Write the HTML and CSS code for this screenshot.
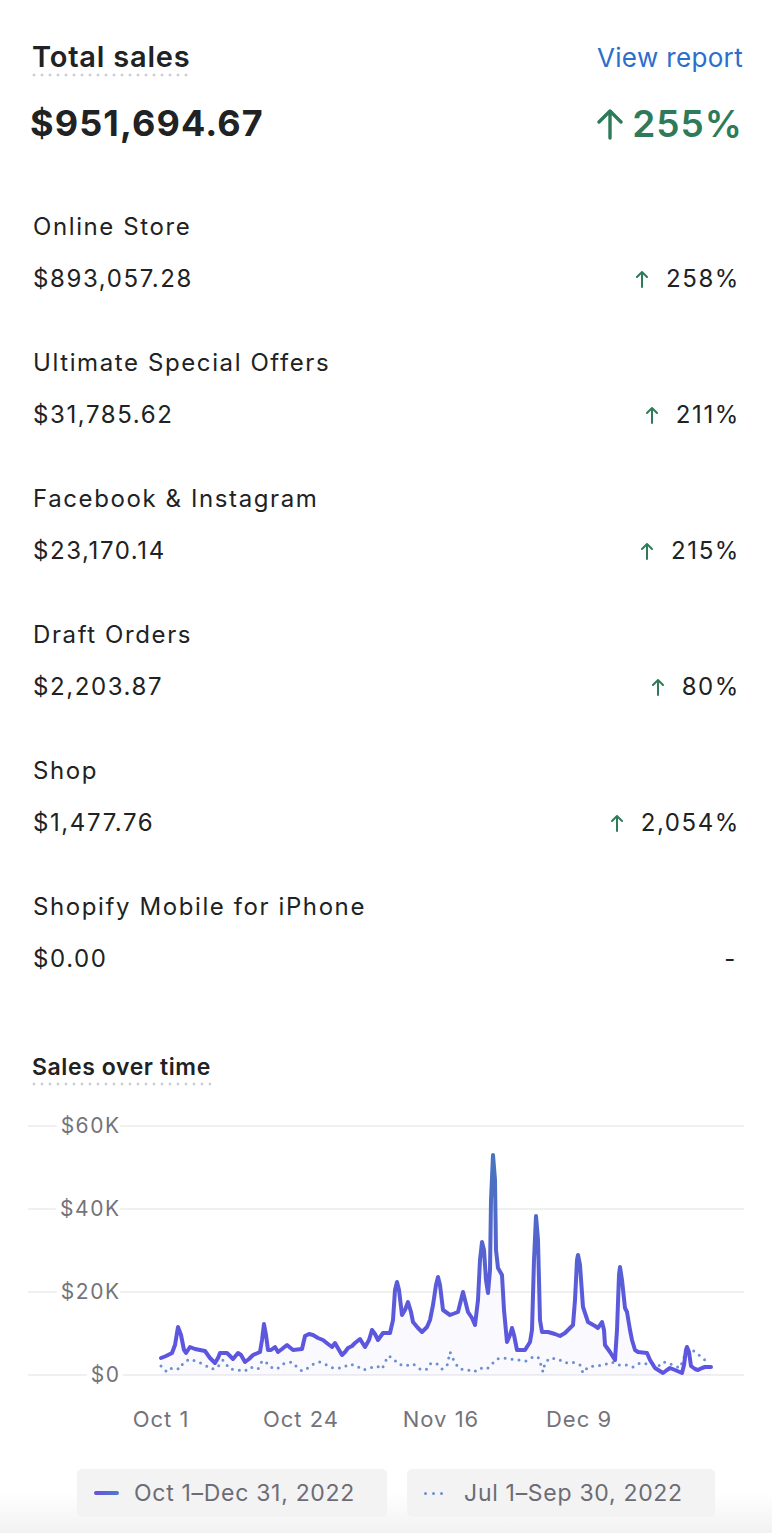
FILE: index.html
```html
<!DOCTYPE html>
<html lang="en">
  <head>
    <meta charset="UTF-8" />
    <meta name="viewport" content="width=device-width, initial-scale=1.0" />
    <title>Total sales</title>
    <link rel="stylesheet" href="styles.css">
  </head>
  <body>
    <div class="card">
      <div class="card-head">
        <h2 class="dotted title">Total sales</h2>
        <a class="report-link" href="#">View report</a>
      </div>
      <div class="card-total">
        <span class="total">$951,694.67</span>
        <span class="total-change">
          <svg class="arrow-big" viewBox="0 0 26 32" width="26" height="32">
            <path d="M13 30V3M2 14L13 3l11 11" fill="none" stroke="currentColor" stroke-width="3.4" stroke-linecap="round" stroke-linejoin="round"/>
          </svg>255%
        </span>
      </div>

      <ul class="channels">
        <li class="channel">
          <span class="channel-name">Online Store</span>
          <div class="channel-row">
            <span>$893,057.28</span>
            <span class="change"><svg class="arrow" viewBox="0 0 12 18" width="12" height="18"><path d="M6 17V2M1 7l5-5 5 5" fill="none" stroke="currentColor" stroke-width="2" stroke-linecap="round" stroke-linejoin="round"/></svg>258%</span>
          </div>
        </li>
        <li class="channel">
          <span class="channel-name">Ultimate Special Offers</span>
          <div class="channel-row">
            <span>$31,785.62</span>
            <span class="change"><svg class="arrow" viewBox="0 0 12 18" width="12" height="18"><path d="M6 17V2M1 7l5-5 5 5" fill="none" stroke="currentColor" stroke-width="2" stroke-linecap="round" stroke-linejoin="round"/></svg>211%</span>
          </div>
        </li>
        <li class="channel">
          <span class="channel-name">Facebook &amp; Instagram</span>
          <div class="channel-row">
            <span>$23,170.14</span>
            <span class="change"><svg class="arrow" viewBox="0 0 12 18" width="12" height="18"><path d="M6 17V2M1 7l5-5 5 5" fill="none" stroke="currentColor" stroke-width="2" stroke-linecap="round" stroke-linejoin="round"/></svg>215%</span>
          </div>
        </li>
        <li class="channel">
          <span class="channel-name">Draft Orders</span>
          <div class="channel-row">
            <span>$2,203.87</span>
            <span class="change"><svg class="arrow" viewBox="0 0 12 18" width="12" height="18"><path d="M6 17V2M1 7l5-5 5 5" fill="none" stroke="currentColor" stroke-width="2" stroke-linecap="round" stroke-linejoin="round"/></svg>80%</span>
          </div>
        </li>
        <li class="channel">
          <span class="channel-name">Shop</span>
          <div class="channel-row">
            <span>$1,477.76</span>
            <span class="change"><svg class="arrow" viewBox="0 0 12 18" width="12" height="18"><path d="M6 17V2M1 7l5-5 5 5" fill="none" stroke="currentColor" stroke-width="2" stroke-linecap="round" stroke-linejoin="round"/></svg>2,054%</span>
          </div>
        </li>
        <li class="channel">
          <span class="channel-name">Shopify Mobile for iPhone</span>
          <div class="channel-row">
            <span>$0.00</span>
            <span class="change no-change">-</span>
          </div>
        </li>
      </ul>

      <h3 class="dotted subtitle">Sales over time</h3>

      <svg class="chart" viewBox="28 1100 716 340" width="716" height="340">
        <defs>
          <linearGradient id="lineGrad" gradientUnits="userSpaceOnUse" x1="0" y1="1155" x2="0" y2="1375">
            <stop offset="0" stop-color="#4776bd"/>
            <stop offset="0.6" stop-color="#5a5cd8"/>
            <stop offset="1" stop-color="#5e54e2"/>
          </linearGradient>
        </defs>
        <g class="grid">
          <line x1="28" y1="1126" x2="744" y2="1126"/>
          <line x1="28" y1="1209" x2="744" y2="1209"/>
          <line x1="28" y1="1292" x2="744" y2="1292"/>
          <line x1="28" y1="1375" x2="744" y2="1375"/>
        </g>
        <g class="y-labels">
          <text x="120.5" y="1133">$60K</text>
          <text x="120.5" y="1216">$40K</text>
          <text x="120.5" y="1299">$20K</text>
          <text x="120.5" y="1382">$0</text>
        </g>
        <g class="x-labels">
          <text x="161" y="1427">Oct 1</text>
          <text x="301" y="1427">Oct 24</text>
          <text x="441" y="1427">Nov 16</text>
          <text x="579" y="1427">Dec 9</text>
        </g>
        <polygon class="area" points="161,1375 161,1358 166,1356 172,1353 175,1345 178,1327 181,1335 184,1350 186,1353 190,1347 195,1349 200,1350 205,1351 210,1358 215,1363 218,1358 220,1353 227,1353 233,1359 238,1353 241,1355 245,1362 249,1359 253,1355 260,1352 262,1340 264,1324 266,1335 268,1350 271,1350 275,1347 278,1352 282,1349 287,1345 293,1350 302,1349 305,1336 309,1334 313,1335 318,1338 323,1340 328,1344 332,1347 335,1343 339,1350 342,1355 345,1352 348,1348 352,1346 355,1343 360,1339 365,1347 369,1340 372,1330 375,1334 378,1340 383,1333 390,1333 393,1320 395,1290 397,1282 399,1290 402,1315 405,1310 408,1302 411,1312 413,1322 418,1328 422,1332 427,1327 430,1320 433,1305 436,1285 438,1277 440,1285 443,1310 450,1315 458,1312 461,1300 463,1292 465,1300 468,1312 472,1318 475,1325 478,1300 480,1260 482,1242 484,1250 486,1280 488,1293 490,1270 491,1200 493,1155 495,1180 496,1250 498,1268 502,1275 504,1310 507,1342 510,1335 512,1328 514,1335 517,1350 525,1350 530,1342 532,1330 534,1260 536,1216 538,1240 540,1320 542,1332 548,1332 555,1334 560,1336 565,1333 570,1328 573,1325 575,1300 577,1260 578,1255 580,1265 583,1307 588,1322 595,1326 598,1328 602,1322 604,1330 605,1345 610,1352 615,1360 617,1330 619,1275 620,1267 622,1280 625,1308 627,1312 630,1330 632,1340 635,1350 638,1352 647,1353 650,1360 655,1368 663,1373 667,1370 670,1368 675,1370 682,1373 684,1365 686,1350 687,1347 689,1352 691,1366 695,1369 698,1370 702,1368 705,1367 711,1367 711,1375"/>
        <polyline class="previous" points="161,1366 167,1372 172,1368 180,1369 183,1363 190,1359 198,1362 205,1365 211,1369 217,1368 223,1360 230,1369 237,1370 245,1371 250,1367 258,1369 262,1361 265,1361 270,1367 277,1369 283,1364 292,1362 297,1367 302,1371 308,1368 315,1363 320,1362 327,1365 333,1368 342,1368 350,1364 357,1366 363,1370 370,1368 377,1366 382,1369 388,1356 393,1358 398,1364 405,1366 413,1364 420,1369 426,1370 431,1363 437,1364 442,1369 447,1366 450,1352 455,1363 460,1369 468,1370 474,1372 480,1368 487,1369 492,1364 497,1359 503,1358 511,1359 518,1360 526,1361 533,1357 538,1357 541,1365 543,1372 545,1363 550,1358 558,1359 565,1363 572,1362 580,1365 583,1373 588,1367 595,1366 603,1365 612,1362 618,1365 627,1365 633,1367 640,1363 648,1364 655,1363 660,1366 665,1362 673,1365 680,1368 686,1352 692,1350 697,1353 702,1358 708,1362"/>
        <polyline class="current" points="161,1358 166,1356 172,1353 175,1345 178,1327 181,1335 184,1350 186,1353 190,1347 195,1349 200,1350 205,1351 210,1358 215,1363 218,1358 220,1353 227,1353 233,1359 238,1353 241,1355 245,1362 249,1359 253,1355 260,1352 262,1340 264,1324 266,1335 268,1350 271,1350 275,1347 278,1352 282,1349 287,1345 293,1350 302,1349 305,1336 309,1334 313,1335 318,1338 323,1340 328,1344 332,1347 335,1343 339,1350 342,1355 345,1352 348,1348 352,1346 355,1343 360,1339 365,1347 369,1340 372,1330 375,1334 378,1340 383,1333 390,1333 393,1320 395,1290 397,1282 399,1290 402,1315 405,1310 408,1302 411,1312 413,1322 418,1328 422,1332 427,1327 430,1320 433,1305 436,1285 438,1277 440,1285 443,1310 450,1315 458,1312 461,1300 463,1292 465,1300 468,1312 472,1318 475,1325 478,1300 480,1260 482,1242 484,1250 486,1280 488,1293 490,1270 491,1200 493,1155 495,1180 496,1250 498,1268 502,1275 504,1310 507,1342 510,1335 512,1328 514,1335 517,1350 525,1350 530,1342 532,1330 534,1260 536,1216 538,1240 540,1320 542,1332 548,1332 555,1334 560,1336 565,1333 570,1328 573,1325 575,1300 577,1260 578,1255 580,1265 583,1307 588,1322 595,1326 598,1328 602,1322 604,1330 605,1345 610,1352 615,1360 617,1330 619,1275 620,1267 622,1280 625,1308 627,1312 630,1330 632,1340 635,1350 638,1352 647,1353 650,1360 655,1368 663,1373 667,1370 670,1368 675,1370 682,1373 684,1365 686,1350 687,1347 689,1352 691,1366 695,1369 698,1370 702,1368 705,1367 711,1367"/>
      </svg>

      <div class="legend">
        <div class="legend-item">
          <span class="swatch-line"></span>
          Oct 1–Dec 31, 2022
        </div>
        <div class="legend-item">
          <span class="swatch-dots"><i></i><i></i><i></i></span>
          Jul 1–Sep 30, 2022
        </div>
      </div>
    </div>
  </body>
</html>
```

FILE: styles.css
```css
html {
  background: linear-gradient(to bottom, #fff 1492px, #f2f2f3 1533px);
  min-height: 1533px;
}
body {
  margin: 0;
  font-family: 'Inter', 'Noto Sans', sans-serif;
  color: #202223;
}
.card {
  padding: 39px 29px 0 32px;
  box-sizing: border-box;
  width: 772px;
}
.dotted {
  display: inline-block;
  margin: 0;
  padding-bottom: 2px;
  background-image: radial-gradient(circle, #c9ced6 1.3px, transparent 1.7px);
  background-size: 8px 4px;
  background-repeat: repeat-x;
  background-position: -2px bottom;
}
.card-head {
  display: flex;
  justify-content: space-between;
  align-items: baseline;
}
.title {
  font-size: 29px;
  line-height: 36px;
  font-weight: 600;
  letter-spacing: 0.8px;
}
.report-link {
  font-size: 26px;
  letter-spacing: 0.35px;
  color: #2c6ecb;
  text-decoration: none;
}
.card-total {
  display: flex;
  justify-content: space-between;
  align-items: center;
  margin-top: 24px;
  height: 44px;
}
.total {
  font-size: 36px;
  font-weight: 700;
  letter-spacing: 1.1px;
  margin-left: -2px;
}
.total-change {
  display: flex;
  align-items: center;
  gap: 9px;
  font-size: 37px;
  font-weight: 600;
  letter-spacing: 1px;
  color: #2f7a59;
}
.arrow-big {
  margin-top: 2px;
}
.channels {
  list-style: none;
  margin: 66px 0 0;
  padding: 0 3px 0 1px;
}
.channel {
  display: flex;
  flex-direction: column;
  gap: 20px;
  margin-bottom: 52px;
  font-size: 24px;
  line-height: 32px;
  letter-spacing: 1.6px;
}
.channel-row {
  display: flex;
  justify-content: space-between;
}
.change {
  display: flex;
  align-items: center;
  gap: 18px;
}
.change .arrow {
  color: #2f7a59;
}
.no-change {
  padding-right: 3px;
}
.subtitle {
  margin-top: 25px;
  font-size: 23px;
  line-height: 30px;
  font-weight: 600;
  letter-spacing: 0.6px;
  padding-bottom: 4px;
}
.chart {
  display: block;
  margin: 14px 0 0 -4px;
  font-family: 'Inter', 'Noto Sans', sans-serif;
}
.grid line {
  stroke: #ebebed;
  stroke-width: 1.6;
}
.y-labels text {
  font-size: 21px;
  letter-spacing: 1.5px;
  fill: #74737a;
  text-anchor: end;
  stroke: #fff;
  stroke-width: 10px;
  paint-order: stroke;
}
.x-labels text {
  font-size: 22px;
  letter-spacing: 1px;
  fill: #74737a;
  text-anchor: middle;
}
.area {
  fill: rgba(96, 90, 230, 0.035);
}
.current {
  fill: none;
  stroke: url(#lineGrad);
  stroke-width: 4;
  stroke-linejoin: round;
  stroke-linecap: round;
}
.previous {
  fill: none;
  stroke: #6b8fd0;
  stroke-width: 3;
  stroke-linecap: round;
  stroke-dasharray: 0 7;
}
.legend {
  display: flex;
  gap: 20px;
  margin: 29px 0 0 45px;
}
.legend-item {
  display: flex;
  align-items: center;
  gap: 15px;
  height: 48px;
  padding: 0 32px 0 17px;
  background: #f3f3f4;
  border-radius: 5px;
  font-size: 23px;
  letter-spacing: 0.7px;
  color: #6d6c74;
}
.swatch-line {
  width: 25px;
  height: 4px;
  border-radius: 2px;
  background: linear-gradient(to right, #6a4fe0, #4c7bc9);
}
.swatch-dots {
  display: flex;
  gap: 5px;
  width: 25px;
}
.swatch-dots i {
  width: 3px;
  height: 3px;
  border-radius: 50%;
  background: #6b8fd0;
}
```
